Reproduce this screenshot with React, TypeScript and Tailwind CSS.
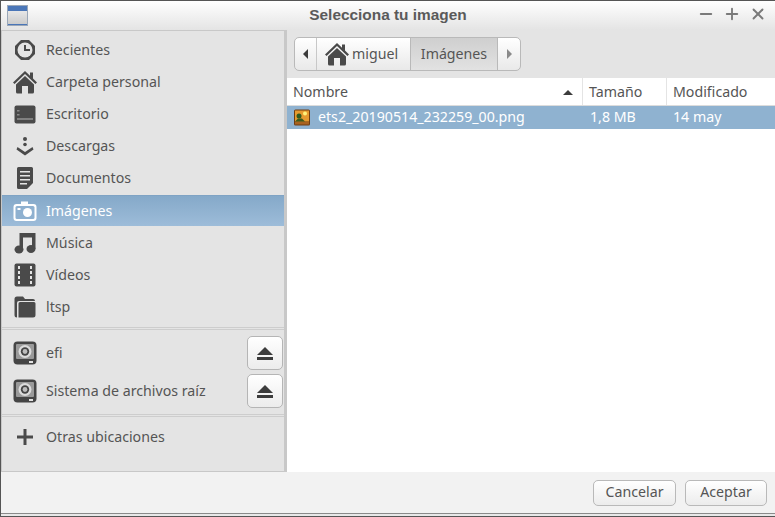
import React from "react";
import { Plus, Minus, X } from "lucide-react";

const iconColor = "#4a4a4a";

const ClockIcon = () => (
  <svg width="22" height="22" viewBox="0 0 22 22">
    <path d="M7 1h8l6 6v8l-6 6H7l-6-6V7z" fill={iconColor} />
    <circle cx="11" cy="11" r="7.5" fill="#e4e4e4" />
    <path d="M10 6h2v4h4v2h-6z" fill={iconColor} />
  </svg>
);

const HomeIcon = ({ size = 24 }: { size?: number }) => (
  <svg width={size} height={size} viewBox="0 0 24 24">
    <path d="M12 1L0 12.500l1.600 1.600L12 4l10.400 10.100 1.600-1.600L20 8.600V2.500h-3v3.200z" fill={iconColor} />
    <path d="M3 14.500L12 6l9 8.500V22a1.500 1.500 0 0 1-1.500 1.500h-4.500V16h-6v7.500H4.500A1.500 1.500 0 0 1 3 22z" fill={iconColor} />
  </svg>
);

const DesktopIcon = () => (
  <svg width="22" height="19" viewBox="0 0 22 19">
    <rect x="0.500" y="0.500" width="21" height="18" rx="2" fill={iconColor} />
    <rect x="3" y="5" width="2.500" height="1.500" fill="#8a8a8a" />
    <rect x="3" y="9" width="2.500" height="1.500" fill="#8a8a8a" />
    <rect x="3" y="13.500" width="16" height="1" fill="#b5b5b5" />
  </svg>
);

const DownloadIcon = () => (
  <svg width="18" height="20" viewBox="0 0 18 20">
    <circle cx="9" cy="3" r="2" fill={iconColor} />
    <circle cx="9" cy="8.500" r="1.800" fill={iconColor} />
    <path d="M1.500 11l7.500 5 7.500-5 1 2.500L9 19.500.500 13.500z" fill={iconColor} />
  </svg>
);

const DocumentIcon = () => (
  <svg width="18" height="22" viewBox="0 0 18 22">
    <path d="M2.500 0h13A1.500 1.500 0 0 1 17 1.500V16l-6 6H2.500A1.500 1.500 0 0 1 1 20.500v-19A1.500 1.500 0 0 1 2.500 0z" fill={iconColor} />
    <path d="M4 4h10v1.500H4zM4 8h10v1.500H4zM4 12h10v1.500H4zM4 16h7v1.500H4z" fill="#e4e4e4" />
  </svg>
);

const CameraIcon = () => (
  <svg width="24" height="21" viewBox="0 0 24 21">
    <path d="M8 0.500h7v2.500h5.500A3 3 0 0 1 23.500 6v11a3 3 0 0 1-3 3h-17a3 3 0 0 1-3-3V6a3 3 0 0 1 3-3H8z" fill="#fff" />
    <rect x="2.500" y="5" width="19" height="13" rx="1.500" fill="#8fb1d0" />
    <circle cx="14.500" cy="11.500" r="4.500" fill="#fff" />
    <rect x="4.500" y="7" width="3" height="2" fill="#fff" />
  </svg>
);

const MusicIcon = () => (
  <svg width="22" height="22" viewBox="0 0 22 22">
    <path d="M5.500 1h16v16h-3.500V5.500h-9V17.500H5.500z" fill={iconColor} />
    <ellipse cx="5" cy="17.500" rx="4.500" ry="4" fill={iconColor} />
    <ellipse cx="17" cy="17" rx="4.500" ry="4" fill={iconColor} />
  </svg>
);

const VideoIcon = () => (
  <svg width="22" height="24" viewBox="0 0 22 24">
    <rect x="0.500" y="0.500" width="21" height="23" rx="2" fill={iconColor} />
    <path d="M4 3h2v3H4zM4 8h2v3H4zM4 13h2v3H4zM4 18h2v3H4zM16 3h2v3h-2zM16 8h2v3h-2zM16 13h2v3h-2zM16 18h2v3h-2z" fill="#e4e4e4" />
  </svg>
);

const FolderIcon = () => (
  <svg width="22" height="22" viewBox="0 0 22 22">
    <path d="M3 0.500h6L11 3h8a2 2 0 0 1 2 2H5a2 2 0 0 0-2 2v14.500A2.500 2.500 0 0 1 0.500 19V3A2.500 2.500 0 0 1 3 0.500z" fill={iconColor} />
    <path d="M6 6h14a1.500 1.500 0 0 1 1.500 1.500V19a2.500 2.500 0 0 1-2.500 2.500H4.500V7.500A1.500 1.500 0 0 1 6 6z" fill={iconColor} />
  </svg>
);

const DiskIcon = () => (
  <svg width="24" height="24" viewBox="0 0 24 24">
    <rect x="0.500" y="0.500" width="23" height="23" rx="4" fill="#454545" />
    <rect x="3" y="3" width="18" height="15" rx="1" fill="#9a9a9a" />
    <circle cx="12" cy="10.500" r="6.500" fill="#dcdcdc" />
    <circle cx="12" cy="10.500" r="4.200" fill="#454545" />
    <circle cx="12" cy="10.500" r="2.400" fill="#bdbdbd" />
    <rect x="16" y="20" width="4" height="2" fill="#e4e4e4" />
  </svg>
);

const PlusIcon = () => (
  <svg width="16" height="16" viewBox="0 0 16 16">
    <path d="M6.500 0h3v6.500H16v3H9.500V16h-3V9.500H0v-3h6.500z" fill={iconColor} />
  </svg>
);

const EjectIcon = () => (
  <svg width="16" height="13" viewBox="0 0 16 13">
    <path d="M8 0l8 8H0z" fill="#3c3c3c" />
    <rect x="0" y="10" width="16" height="3" fill="#3c3c3c" />
  </svg>
);

const ImageFileIcon = () => (
  <svg width="16" height="17" viewBox="0 0 16 17">
    <rect x="0" y="0.500" width="16" height="16" rx="1.500" fill="#6e3d12" />
    <rect x="1" y="1.500" width="14" height="11" fill="#e59a2f" />
    <circle cx="11" cy="4.500" r="2" fill="#fff27a" />
    <path d="M1 12.500l3-3h4l3 3z" fill="#3c5a1c" />
    <circle cx="5" cy="7" r="2.500" fill="#2f5a1e" />
    <rect x="1" y="13" width="14" height="2.500" fill="#a8621f" />
  </svg>
);

const WindowIcon = () => (
  <div className="flex h-[21px] w-[21px] flex-col border border-[#9aa7b8] bg-gradient-to-b from-[#f2f2f2] to-[#c9c9c9]">
    <div className="h-[5px] bg-[#4a76b8]" />
    <div className="flex-1" />
    <div className="h-[1px] bg-[#4a76b8]" />
  </div>
);

const places = [
  { label: "Recientes", icon: <ClockIcon /> },
  { label: "Carpeta personal", icon: <HomeIcon /> },
  { label: "Escritorio", icon: <DesktopIcon /> },
  { label: "Descargas", icon: <DownloadIcon /> },
  { label: "Documentos", icon: <DocumentIcon /> },
  { label: "Imágenes", icon: <CameraIcon />, selected: true },
  { label: "Música", icon: <MusicIcon /> },
  { label: "Vídeos", icon: <VideoIcon /> },
  { label: "ltsp", icon: <FolderIcon /> },
];

const Sidebar = () => (
  <aside className="flex w-[286px] shrink-0 flex-col border-t border-r-[3px] border-b border-l border-[#c8c8c8] bg-[#e4e4e4] text-[#555555]">
    <div className="flex flex-col pt-[3px]">
      {places.map((p) => (
        <div
          key={p.label}
          className={
            p.selected
              ? "my-[1px] flex h-[31px] items-center border-t border-[#7fa3c4] bg-gradient-to-b from-[#85a9c9] to-[#9dbcd9] text-white"
              : "flex h-[32px] items-center"
          }
        >
          <div className="flex w-[44px] justify-center pl-[2px]">{p.icon}</div>
          <span>{p.label}</span>
        </div>
      ))}
    </div>

    {/* unidades */}
    <div className="mt-[4px] h-[3px] border-y border-[#cdcdcd]" />
    <div className="flex flex-col gap-[4px] pt-[6px]">
      {["efi", "Sistema de archivos raíz"].map((d) => (
        <div key={d} className="flex h-[34px] items-center">
          <div className="flex w-[44px] justify-center pl-[2px]">
            <DiskIcon />
          </div>
          <span className="flex-1">{d}</span>
          <button className="mr-[1px] flex h-[34px] w-[36px] items-center justify-center rounded-[5px] border border-[#b5b5b5] bg-gradient-to-b from-white to-[#ececec]">
            <EjectIcon />
          </button>
        </div>
      ))}
    </div>
    <div className="mt-[6px] h-[3px] border-y border-[#cdcdcd]" />
    <div className="flex h-[40px] items-center">
      <div className="flex w-[44px] justify-center pl-[2px]">
        <PlusIcon />
      </div>
      <span>Otras ubicaciones</span>
    </div>
  </aside>
);

const PathBar = () => (
  <div className="flex h-[34px] w-[227px] overflow-hidden rounded-[5px] border border-[#b9b9b9] bg-gradient-to-b from-white to-[#e9e9e9] text-[#555555]">
    <div className="flex w-[22px] items-center justify-center border-r border-[#c8c8c8]">
      <div className="h-0 w-0 border-y-[5px] border-r-[5px] border-y-transparent border-r-[#3c3c3c]" />
    </div>
    <div className="flex w-[93px] items-center gap-[3px] pl-[8px]">
      <HomeIcon size={24} />
      <span>miguel</span>
    </div>
    <div className="flex w-[88px] items-center justify-center border-x border-[#b9b9b9] bg-gradient-to-b from-[#cfcfcf] to-[#e2e2e2]">
      Imágenes
    </div>
    <div className="flex flex-1 items-center justify-center">
      <div className="h-0 w-0 border-y-[5px] border-l-[5px] border-y-transparent border-l-[#8a8a8a]" />
    </div>
  </div>
);

const FileList = () => (
  <div className="flex-1 bg-white text-[#555555]">
    <div className="flex h-[28px] border-b border-[#dcdcdc]">
      <div className="flex w-[296px] items-center justify-between border-r border-[#e4e4e4] pt-[1px] pr-[9px] pl-[6px]">
        <span>Nombre</span>
        <div className="h-0 w-0 border-x-[5px] border-b-[5px] border-x-transparent border-b-[#3c3c3c]" />
      </div>
      <div className="flex w-[84px] items-center border-r border-[#e4e4e4] pt-[1px] pl-[6px]">Tamaño</div>
      <div className="flex flex-1 items-center pt-[1px] pl-[6px]">Modificado</div>
    </div>
    <div className="flex h-[23px] items-center bg-[#8fb2d0] text-white">
      <div className="flex w-[295px] items-center gap-[8px] pl-[7px]">
        <ImageFileIcon />
        <span>ets2_20190514_232259_00.png</span>
      </div>
      <div className="w-[84px] pl-[8px]">1,8 MB</div>
      <div className="flex-1 pl-[7px]">14 may</div>
    </div>
  </div>
);

export default function App() {
  return (
    <div className="flex h-[517px] w-[775px] flex-col overflow-hidden border-t border-l border-[#555555] bg-[#f2f2f2] font-['Noto_Sans',sans-serif] text-[14.2px] leading-none">
      {/* barra de título */}
      <header className="grid h-[29px] shrink-0 grid-cols-[1fr_auto_1fr] items-center bg-gradient-to-b from-white to-[#e4e4e4] text-[#5a5a5a]">
        <div className="pl-[6px]">
          <WindowIcon />
        </div>
        <h1 className="pb-[1px] font-['Liberation_Sans',sans-serif] text-[15.4px] font-bold">Selecciona tu imagen</h1>
        <div className="flex justify-end gap-[8px] pr-[8px] pb-[3px] text-[#7a7a7a]">
          <Minus size={18} strokeWidth={2.5} />
          <Plus size={18} strokeWidth={2.5} />
          <X size={18} strokeWidth={2.5} />
        </div>
      </header>

      <div className="flex h-[442px] shrink-0">
        <Sidebar />
        <main className="flex flex-1 flex-col">
          <div className="h-[48px] shrink-0 bg-[#e4e4e4] pt-[7px] pl-[7px]">
            <PathBar />
          </div>
          <FileList />
        </main>
      </div>

      {/* botones */}
      <footer className="flex h-[41px] shrink-0 items-center justify-end gap-[9px] pr-[8px] text-[#555555]">
        <button className="h-[26px] w-[83px] rounded-[5px] border border-[#b9b9b9] bg-gradient-to-b from-white to-[#ececec]">
          Cancelar
        </button>
        <button className="h-[26px] w-[82px] rounded-[5px] border border-[#b9b9b9] bg-gradient-to-b from-white to-[#ececec]">
          Aceptar
        </button>
      </footer>
      <div className="h-[1px] bg-[#8a8a8a]" />
      <div className="h-[2px] bg-[#e8e8e8]" />
      <div className="h-[1px] bg-[#555555]" />
    </div>
  );
}
